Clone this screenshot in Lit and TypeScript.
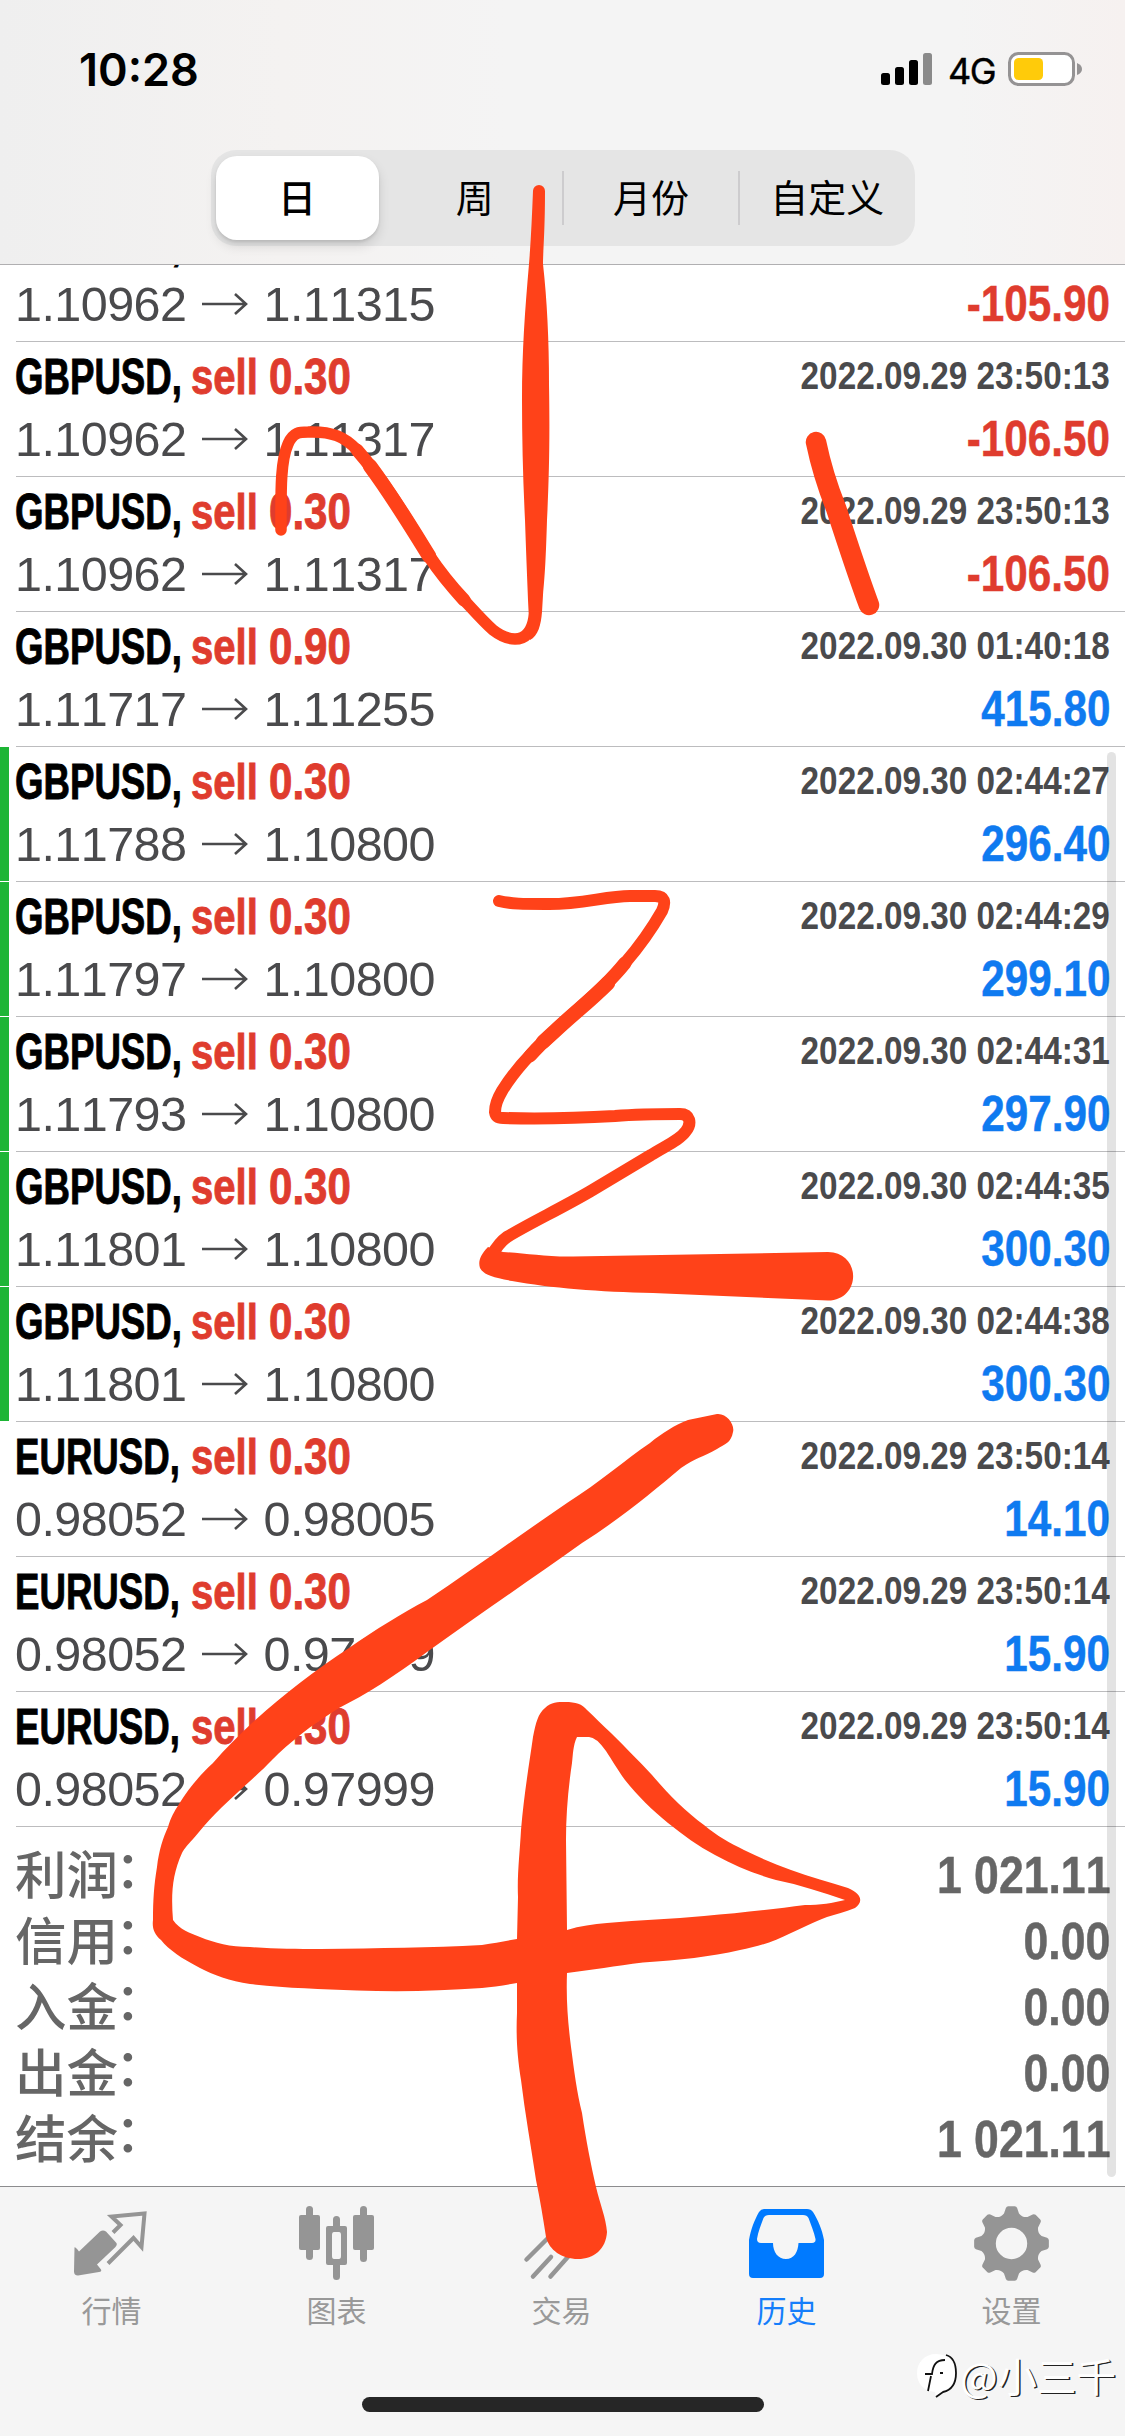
import { LitElement, html, svg, css } from "lit";
import { customElement, property } from "lit/decorators.js";
import { classMap } from "lit/directives/class-map.js";

interface Deal {
  symbol: string;
  volume: string;
  open: string;
  close: string;
  time: string;
  profit: string;
  marked?: boolean;
}

const deal = (
  symbol: string, volume: string, open: string, close: string,
  time: string, profit: string, marked = false,
): Deal => ({ symbol, volume, open, close, time, profit, marked });

const DEALS: Deal[] = [
  deal("GBPUSD", "0.30", "1.10962", "1.11315", "2022.09.29 23:50:13", "-105.90"),
  deal("GBPUSD", "0.30", "1.10962", "1.11317", "2022.09.29 23:50:13", "-106.50"),
  deal("GBPUSD", "0.30", "1.10962", "1.11317", "2022.09.29 23:50:13", "-106.50"),
  deal("GBPUSD", "0.90", "1.11717", "1.11255", "2022.09.30 01:40:18", "415.80"),
  deal("GBPUSD", "0.30", "1.11788", "1.10800", "2022.09.30 02:44:27", "296.40", true),
  deal("GBPUSD", "0.30", "1.11797", "1.10800", "2022.09.30 02:44:29", "299.10", true),
  deal("GBPUSD", "0.30", "1.11793", "1.10800", "2022.09.30 02:44:31", "297.90", true),
  deal("GBPUSD", "0.30", "1.11801", "1.10800", "2022.09.30 02:44:35", "300.30", true),
  deal("GBPUSD", "0.30", "1.11801", "1.10800", "2022.09.30 02:44:38", "300.30", true),
  deal("EURUSD", "0.30", "0.98052", "0.98005", "2022.09.29 23:50:14", "14.10"),
  deal("EURUSD", "0.30", "0.98052", "0.97999", "2022.09.29 23:50:14", "15.90"),
  deal("EURUSD", "0.30", "0.98052", "0.97999", "2022.09.29 23:50:14", "15.90"),
];

const TOTALS: [string, string][] = [
  ["利润", "1 021.11"],
  ["信用", "0.00"],
  ["入金", "0.00"],
  ["出金", "0.00"],
  ["结余", "1 021.11"],
];

@customElement("status-bar")
class StatusBar extends LitElement {
  static styles = css`
    :host { display: flex; justify-content: space-between; height: 150px; padding: 0 42px 0 79px; box-sizing: border-box; }
    .time { font: 600 45px/140px Inter, "Liberation Sans", sans-serif; color: #000; }
    .right { display: flex; height: 138px; align-items: center; }
    .net { font: 400 36px/138px Inter, "Liberation Sans", sans-serif; width: 47px; margin: 0 13px 0 15px; letter-spacing: -1.5px; position: relative; top: 2px; -webkit-text-stroke: 0.4px #000; }
    svg { display: block; }
  `;
  render() {
    return html`
      <div class="time">10:28</div>
      <div class="right">
        <svg width="52" height="34" viewBox="0 0 52 34">
          <rect x="0" y="21" width="9" height="12" rx="2.5" />
          <rect x="14" y="15" width="9" height="18" rx="2.5" />
          <rect x="28" y="8" width="9" height="25" rx="2.5" />
          <rect x="42" y="1" width="9" height="32" rx="2.5" fill="#8a8a8a" />
        </svg>
        <div class="net">4G</div>
        <svg width="75" height="36" viewBox="0 0 75 36">
          <rect x="1.5" y="2.5" width="64" height="31" rx="9" fill="#fff" stroke="#959394" stroke-width="3" />
          <rect x="6" y="7" width="29" height="22" rx="4.5" fill="#ffcb0a" />
          <path d="M69 12q5 2 5 6t-5 6z" fill="#959394" />
        </svg>
      </div>`;
  }
}

@customElement("range-tabs")
class RangeTabs extends LitElement {
  static styles = css`
    :host { display: flex; width: 704px; height: 96px; box-sizing: border-box; margin: 0 auto; padding: 6px 0 6px 5px; border-radius: 25px; background: #e5e5e5; font: 400 38px/80px "Noto Sans CJK SC", sans-serif; color: #000; }
    .tab { flex: 1 1 0; text-align: center; height: 82px; }
    .selected { flex: 0 0 163px; height: 84px; margin-right: 9px; background: #fff; border-radius: 21px; font-weight: 500; box-shadow: 0 6px 12px rgba(0, 0, 0, 0.12), 0 2px 3px rgba(0, 0, 0, 0.1); }
    .rule { flex: none; width: 2px; height: 54px; align-self: center; background: #cdccce; }
  `;
  render() {
    return html`
      <div class="tab selected">日</div>
      <div class="tab">周</div>
      <div class="rule"></div>
      <div class="tab">月份</div>
      <div class="rule"></div>
      <div class="tab">自定义</div>`;
  }
}

@customElement("deal-row")
class DealRow extends LitElement {
  @property({ attribute: false }) deal!: Deal;

  static styles = css`
    :host { display: flex; height: 135px; font-family: "Liberation Sans", Arial, sans-serif; font-kerning: none; }
    .mark { width: 9px; height: 134px; margin: 1px 7px 0 0; }
    .marked { background: #1db535; }
    .body { flex: 1; border-top: 1px solid #bcbcbe; padding-right: 15px; }
    .line { display: flex; justify-content: space-between; white-space: pre; }
    .head { height: 69px; line-height: 69px; font-weight: 700; font-size: 49.5px; }
    .name { display: flex; -webkit-text-stroke: 0.9px currentColor; }
    .name span { display: block; flex: none; }
    .name i { display: inline-block; font-style: normal; transform-origin: 0 50%; }
    .symbol { width: 176px; margin-left: -1px; }
    .symbol i { transform: scaleX(0.74); }
    .side { width: 78px; color: #df3c2e; }
    .side i { transform: scaleX(0.81); }
    .volume { color: #df3c2e; }
    .volume i { transform: scaleX(0.85); }
    .time { font-size: 39.5px; line-height: 67px; color: #4a4a4c; transform: scaleX(0.843); transform-origin: 100% 50%; }
    .foot { line-height: 56px; height: 56px; }
    .prices { display: flex; font-size: 48.5px; color: #4a4a4c; letter-spacing: -0.55px; margin-left: -1px; }
    .prices svg { display: block; margin: 5px 15px 0 16px; }
    .profit { font-size: 49.5px; font-weight: 700; color: #0f7af0; transform: scaleX(0.853); transform-origin: 100% 50%; -webkit-text-stroke: 0.5px currentColor; }
    .loss { color: #df3c2e; }
  `;
  render() {
    const d = this.deal;
    return html`
      <div class=${classMap({ mark: true, marked: !!d.marked })}></div>
      <div class="body">
        <div class="line head">
          <div class="name">
            <span class="symbol"><i>${d.symbol},</i></span>
            <span class="side"><i>sell</i></span>
            <span class="volume"><i>${d.volume}</i></span>
          </div>
          <div class="time">${d.time}</div>
        </div>
        <div class="line foot">
          <div class="prices">
            <span>${d.open}</span>
            <svg width="46" height="46" viewBox="0 0 46 46" fill="none" stroke="#4a4a4c" stroke-width="2.6">
              <path d="M0 23H44M33 13L44 23L33 33" />
            </svg>
            <span>${d.close}</span>
          </div>
          <div class=${classMap({ profit: true, loss: d.profit.startsWith("-") })}>${d.profit}</div>
        </div>
      </div>`;
  }
}

@customElement("deal-totals")
class DealTotals extends LitElement {
  static styles = css`
    :host { display: block; margin-left: 16px; border-top: 1px solid #bcbcbe; padding: 15px 15px 0 0; color: #666; }
    .line { display: flex; justify-content: space-between; height: 66px; line-height: 66px; }
    .label { display: flex; font: 500 51.5px/60px "Noto Sans CJK SC", sans-serif; margin-left: -1px; }
    .colon { position: relative; top: -6px; left: -3px; }
    .value { font: 700 52px/66px "Liberation Sans", Arial, sans-serif; font-kerning: none; transform: scaleX(0.857); transform-origin: 100% 50%; -webkit-text-stroke: 0.5px currentColor; }
  `;
  render() {
    return TOTALS.map(([label, value]) => html`
      <div class="line">
        <div class="label"><span>${label}</span><span class="colon">：</span></div>
        <div class="value">${value}</div>
      </div>`);
  }
}

const gearPath = () => {
  const pts: string[] = [];
  for (let k = 0; k < 8; k++) {
    const at = (deg: number, r: number) => {
      const a = ((k * 45 + deg) * Math.PI) / 180;
      return `${(r * Math.sin(a)).toFixed(2)} ${(-r * Math.cos(a)).toFixed(2)}`;
    };
    pts.push(`${k ? "L" : "M"}${at(-14, 31)} L${at(-9, 36)} Q${at(-7.5, 37.5)} ${at(-5, 37.5)} L${at(5, 37.5)} Q${at(7.5, 37.5)} ${at(9, 36)} L${at(14, 31)} Q${at(22.5, 28)} ${at(31, 31)}`);
  }
  return pts.join(" ") + "Z M15.7 0A15.7 15.7 0 1 0 -15.7 0A15.7 15.7 0 1 0 15.7 0Z";
};

const ICONS = {
  quotes: svg`
    <g transform="translate(-15 -3)">
      <path d="M15.5 47Q16 46 20 51L41 31Q44 29 47 31L57 42Q59 44 56 47L38 64L42 69Q43 71 40 71.500L19 75Q15 75 15 71Z" fill="#959595" transform="translate(0 .5)" />
      <path d="M54 32.500L61.500 25L52.500 16.500L85.500 13.500L82.500 47L74.500 38L49 63.500" fill="none" stroke="#959595" stroke-width="4" />
    </g>`,
  chart: svg`
    <g fill="#959595">
      <rect x="0" y="12" width="21" height="35" rx="2" /><rect x="7" y="3" width="7" height="54" rx="3.500" />
      <rect x="54" y="12" width="21" height="35" rx="2" /><rect x="61" y="3" width="7" height="56" rx="3.500" />
      <path fill-rule="evenodd" d="M29 23h17a2 2 0 0 1 2 2v35a2 2 0 0 1-2 2h-17a2 2 0 0 1-2-2v-35a2 2 0 0 1 2-2zM35 29q-2 0-2 3v21q0 3 2 3h5q2 0 2-3v-21q0-3-2-3z" />
      <path d="M34 25v-8.500a3.500 3.500 0 0 1 7 0V25zM34 60v13.500a3.500 3.500 0 0 0 7 0V60z" />
    </g>`,
  trade: svg`
    <path d="M2.500 56.500L26 33M9 73.500L27 54M26.500 73.500L50 47" fill="none" stroke="#959595" stroke-width="4.500" stroke-linecap="round" />`,
  history: svg`
    <path fill-rule="evenodd" fill="#007aff" d="M15 6H58Q62 6 64 9C69 17 73 26 75 37V71Q75 75 71 75H4Q0 75 0 71V37C2 26 5 18 10 9Q12 6 15 6ZM20 12Q16 12 14.500 15C12 22 9 29 8 36Q8 40 12 40H24C24 49 29 56 37 56S49 49 49.500 40H63Q67 40 66.500 36C65 29 62 22 59.500 15Q58 12 54 12Z" />`,
  settings: svg`<path transform="translate(37.5 40.5)" fill-rule="evenodd" fill="#959595" d=${gearPath()} />`,
};

@customElement("tab-bar")
class TabBar extends LitElement {
  static styles = css`
    :host { display: flex; flex-direction: column; height: 250px; box-sizing: border-box; border-top: 1px solid #8c8c8e; background: #f5f5f5; }
    .tabs { display: flex; height: 210px; }
    .tab { flex: 1; display: flex; flex-direction: column; align-items: center; padding: 16px 2px 0 0; font: 400 30px/44px "Noto Sans CJK SC", sans-serif; color: #999; }
    .tab svg { display: block; overflow: visible; margin-bottom: 4px; }
    .active { color: #157efb; }
    .home { width: 402px; height: 15px; border-radius: 8px; background: #262626; align-self: center; }
  `;
  private tab(icon: unknown, label: string, active = false) {
    return html`
      <div class=${classMap({ tab: true, active })}>
        <svg width="75" height="80" viewBox="0 0 75 80">${icon}</svg>${label}
      </div>`;
  }
  render() {
    return html`
      <div class="tabs">
        ${this.tab(ICONS.quotes, "行情")}
        ${this.tab(ICONS.chart, "图表")}
        ${this.tab(ICONS.trade, "交易")}
        ${this.tab(ICONS.history, "历史", true)}
        ${this.tab(ICONS.settings, "设置")}
      </div>
      <div class="home"></div>`;
  }
}

/** Freehand marker strokes laid over the whole screen. */
@customElement("marker-layer")
class MarkerLayer extends LitElement {
  static styles = css`
    :host { position: absolute; inset: 0; pointer-events: none; }
    svg { display: block; }
  `;
  render() {
    return html`
      <svg width="1125" height="2436" viewBox="0 0 1125 2436" fill="#ff4219" stroke-linecap="round" stroke-linejoin="round">
        <g fill="none" stroke="#ff4219">
          <path stroke-width="11.500" d="M281 530C281 495 280 462 288 444C293 432 300 432 308 432C332 431 345 437 357 450C385 482 408 522 429 556C441 574 452 587 464 600C476 613 484 622 493 630C502 637 508 639 515 639C527 639 532 630 534 618Q536 610 536 600" />
          <path stroke-width="13" d="M357 450C385 482 408 522 429 556C441 574 452 587 464 600" />
          <path stroke-width="14.500" d="M370 466C393 497 411 527 429 556" />
          <path stroke-width="20.500" d="M816 442C821 466 828 488 836 508C844 532 856 570 869 605" />
          <path stroke-width="12" d="M499 901C512 904 523 904 545 904C580 905 605 896 630 896H655C665 896 666 902 662 911C650 932 638 948 625 963C600 994 575 1011 555 1031C530 1053 513 1073 502 1091C496 1101 495 1107 495 1112Q496 1118 503 1118C540 1119 580 1118 615 1116C640 1114 660 1114 680 1114C690 1114 692 1123 686 1131C680 1140 665 1146 651 1155L590 1191.500C560 1209 530 1223 507 1237C500 1242 496 1248 492 1255" />
          <path stroke-width="13.200" d="M625 963C600 994 575 1011 555 1031C545 1040 537 1048 530 1056" />
          <path stroke-width="14.500" d="M608 983C590 1001 572 1015 555 1031L543 1042" />
        </g>
        <path d="M533 191A6 6 0 0 1 545 191C545 230 543 252 543 264C547 300 549 340 549 385C550 440 549 480 547 520C546 555 545 575 543 595L542 612C541 625 538 636 530 640L528 600C527 575 526 550 525 520C523 480 522 440 522 400C522 350 525 310 529 264C531 240 532 215 533 191Z" />
        <path d="M488 1247C480 1255 478 1262 480 1268C484 1275 492 1277 512 1281C550 1288 600 1292 653 1293L828 1300.500C861 1300 862 1253 828 1252L573 1256.500C545 1257 525 1253 503 1252Z" />
        <path d="M717 1414C727 1413 735 1425 733 1432C731 1443 725 1444 717 1449C703 1457 695 1458 681 1468C655 1490 620 1519 582 1543C530 1580 480 1614 427 1652C395 1676 365 1695 339 1708C310 1726 290 1742 272 1760C255 1778 225 1802 204 1826C190 1843 186 1846 182 1853C172 1875 171 1895 173 1920C180 1930 190 1933 200 1937C215 1943 230 1947 250 1947C275 1949 295 1949 321 1949C380 1948 430 1948 482 1945C495 1943 505 1941 517 1939L518 1897C517 1875 520 1850 521 1830C524 1795 529 1765 533 1737C536 1722 538 1714 545 1708C551 1702 558 1702 565 1702C576 1702 582 1704 587 1710C595 1717 602 1725 611 1733C625 1747 638 1760 652 1775C668 1794 685 1811 704 1825C717 1836 730 1843 744 1850C760 1858 775 1864 791 1870C810 1877 830 1882 848 1888C864 1895 862 1903 855 1908C845 1912 836 1914 827 1917C813 1922 803 1928 791 1933C773 1942 757 1947 740 1950C710 1957 680 1960 643 1962.500C615 1966 592 1970 567 1973C566 2000 568 2023 571 2047C574 2070 577 2093 582 2113C586 2140 591 2165 596 2187C600 2204 606 2218 607 2232C606 2249 594 2259 578 2259C562 2259 549 2250 546 2237C543 2218 540 2199 536 2180C531 2147 525 2113 521 2080C517 2055 516 2035 517 2013L517 1983C505 1985 493 1987 482 1988C440 1991 400 1992 357 1990.500C320 1989 285 1988 250 1984C230 1981 213 1975 200 1968C181 1958 169 1950 161 1940C154 1934 152 1928 153 1920C153 1900 154 1885 157 1867C159 1850 163 1838 168 1827C171 1817 174 1812 179 1804C189 1788 200 1775 213 1763C226 1748 239 1735 252 1723C283 1695 315 1670 349 1648C375 1630 402 1613 427 1600C475 1568 520 1535 567 1503C600 1482 625 1460 650 1443C662 1433 675 1425 688 1420Z M577 1737C573 1745 573 1755 572 1763C568 1790 566 1815 566 1840L567 1930C580 1926 593 1924 607 1923C640 1920 672 1919 704 1916C740 1913 775 1909 805 1905C820 1905 833 1903 845 1900C822 1892 800 1885 776 1880C755 1874 735 1866 715 1855C698 1846 683 1835 668 1823C652 1810 638 1796 625 1780C617 1769 612 1760 606 1751Q596 1737 589 1737Z" fill-rule="evenodd" />
      </svg>`;
  }
}

@customElement("author-stamp")
class AuthorStamp extends LitElement {
  static styles = css`
    :host { position: absolute; right: 9px; bottom: 31px; display: flex; align-items: center; height: 60px; }
    svg { display: block; margin-top: 2px; }
    .name { font: 400 39.5px/60px "Noto Sans CJK SC", sans-serif; color: #fff; text-shadow: 1.5px 1px 0.5px #222; }
  `;
  render() {
    return html`
      <svg width="45" height="50" viewBox="0 0 45 50">
        <path d="M21 3C34 3 40 12 40 22C40 33 34 40 26 41L21 46L20 41C9 40 2 33 2 22C2 11 10 3 21 3Z" fill="#fff" />
        <path d="M13 40L16 25M10 23H17C18 14 21 9 30 9M25 22H28M31 4C38 6 41 12 41 22C41 33 37 39 28 41L21 46" fill="none" stroke="#111" stroke-width="1.800" />
      </svg>
      <span class="name">@小三千</span>`;
  }
}

@customElement("app-root")
class AppRoot extends LitElement {
  static styles = css`
    :host { display: flex; flex-direction: column; position: relative; width: 1125px; height: 2436px; overflow: hidden; background: #fff; }
    .header { flex: none; height: 265px; box-sizing: border-box; border-bottom: 1px solid #b0afb1; background: linear-gradient(90deg, #efefef 0%, #f4f2f1 25%, #f4f4f4 45%, #f4f4f4 85%, #f6f1f0 100%); }
    .list { flex: 1; min-height: 0; overflow: hidden; position: relative; }
    .rows { margin-top: -59px; }
    .thumb { position: absolute; right: 9px; top: 487px; bottom: 9px; width: 9px; border-radius: 5px; background: rgba(0, 0, 0, 0.11); }
  `;
  render() {
    return html`
      <div class="header">
        <status-bar></status-bar>
        <range-tabs></range-tabs>
      </div>
      <div class="list">
        <div class="rows">
          ${DEALS.map((d) => html`<deal-row .deal=${d}></deal-row>`)}
          <deal-totals></deal-totals>
        </div>
        <div class="thumb"></div>
      </div>
      <tab-bar></tab-bar>
      <marker-layer></marker-layer>
      <author-stamp></author-stamp>`;
  }
}
